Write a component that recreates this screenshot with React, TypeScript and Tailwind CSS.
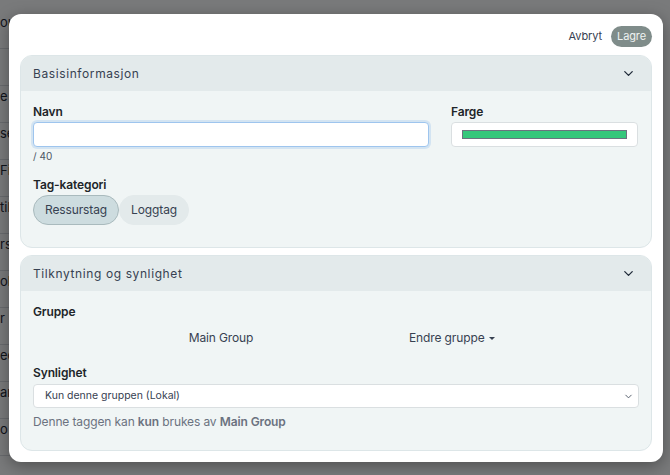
import { ChevronDown } from 'lucide-react';

const bakgrunn = ['ou', '', 'e', 'se', 'Fil', 'til', 'rs', 'ok', 'r', 'ed', 'an', 'o'];

export default function App() {
  return (
    <div className="relative h-[475px] w-[670px] overflow-hidden bg-[#f3f4f6] font-['Inter',sans-serif] text-[#212529]">
      {/* Siden bak modalen */}
      <div className="flex w-[60px] flex-col pt-[12px] text-[13px] text-[#1f2937]">
        {bakgrunn.map((t, i) => (
          <div key={i} className="h-[37px] border-b border-[#d1d5db] leading-[20px]">
            {t}
          </div>
        ))}
      </div>

      {/* Overlay */}
      <div className="absolute inset-0 bg-black/50" />

      {/* Modal */}
      <div className="absolute left-[9px] top-[14px] flex h-[448px] w-[654px] flex-col rounded-[12px] bg-white p-[11px] shadow-[0_4px_16px_rgba(0,0,0,0.35)]">
        <div className="flex h-[21px] items-center justify-end gap-[9px] pt-[1px]">
          <button className="text-[11px] tracking-[-0.01em] text-[#374151]">Avbryt</button>
          <button className="h-[21px] rounded-full bg-[#7f8c8a] px-[6px] text-[11px] tracking-[-0.01em] text-[#eef2f1]">Lagre</button>
        </div>

        <div className="mt-[9px] flex flex-col gap-[7px]">
          <Seksjon tittel="Basisinformasjon" hoyde="h-[193px]">
            <div className="flex gap-[22px]">
              <div className="w-[396px]">
                <Etikett>Navn</Etikett>
                <input className="mt-[2px] block h-[25px] w-full rounded-[4px] border border-[#9ec5ee] bg-white px-2 text-[12px] shadow-[0_0_0_2px_rgba(158,197,238,0.35)] outline-none" />
                <div className="mt-[3px] text-[10px] leading-[12px] text-[#4b5563]">/ 40</div>
              </div>
              <div className="w-[187px]">
                <Etikett>Farge</Etikett>
                <div className="mt-[2px] flex h-[25px] items-center rounded-[4px] border border-[#dadfe1] bg-white px-[10px]">
                  <div className="h-[9px] w-full border border-[#6b7280] bg-[#34c77b]" />
                </div>
              </div>
            </div>
            <div className="mt-[15px]">
              <Etikett>Tag-kategori</Etikett>
              <div className="mt-[2px] flex">
                <button className="h-[30px] rounded-full border border-[#a9babd] bg-[#cddcdf] px-[11px] text-[12px] tracking-[-0.01em] text-[#374151]">
                  Ressurstag
                </button>
                <button className="h-[30px] rounded-full border border-[#e3eaeb] bg-[#e3eaeb] px-[11px] text-[12px] tracking-[-0.01em] text-[#374151]">
                  Loggtag
                </button>
              </div>
            </div>
          </Seksjon>

          <Seksjon tittel="Tilknytning og synlighet" hoyde="h-[196px]">
            <Etikett>Gruppe</Etikett>
            <div className="mt-[9px] flex items-center text-[12px] tracking-[-0.01em] text-[#374151]">
              <div className="w-[376px] text-center">Main Group</div>
              <div className="flex items-center gap-[4px]">
                Endre gruppe
                <span className="mt-[1px] border-x-[3px] border-t-[3.5px] border-x-transparent border-t-[#374151]" />
              </div>
            </div>
            <div className="mt-[18px]">
              <Etikett>Synlighet</Etikett>
              <div className="mt-[3px] flex h-[24px] items-center justify-between rounded-[4px] border border-[#dadfe1] bg-white pl-[11px] pr-[4px] text-[10.5px] text-[#374151]">
                <span>Kun denne gruppen (Lokal)</span>
                <ChevronDown className="h-[11px] w-[11px] text-[#4b5563]" strokeWidth={2} />
              </div>
              <div className="mt-[5px] text-[12px] tracking-[-0.01em] text-[#6b7280]">
                Denne taggen kan <b className="font-semibold">kun</b> brukes av <b className="font-semibold">Main Group</b>
              </div>
            </div>
          </Seksjon>
        </div>
      </div>
    </div>
  );
}

function Seksjon({ tittel, hoyde, children }: { tittel: string; hoyde: string; children: React.ReactNode }) {
  return (
    <div className={`${hoyde} overflow-hidden rounded-[12px] border border-[#dde6e8] bg-[#f0f5f5]`}>
      <div className="flex h-[35px] items-center justify-between bg-[#e3eaeb] pl-[12px] pr-[15px]">
        <span className="text-[12px] tracking-[0.05em] text-[#374151]">{tittel}</span>
        <ChevronDown className="h-[15px] w-[15px] text-[#1f2937]" strokeWidth={2} />
      </div>
      <div className="px-[12px] pt-[13px]">{children}</div>
    </div>
  );
}

function Etikett({ children }: { children: React.ReactNode }) {
  return <div className="text-[12px] font-semibold leading-[16px] tracking-[-0.01em] text-[#212529]">{children}</div>;
}
